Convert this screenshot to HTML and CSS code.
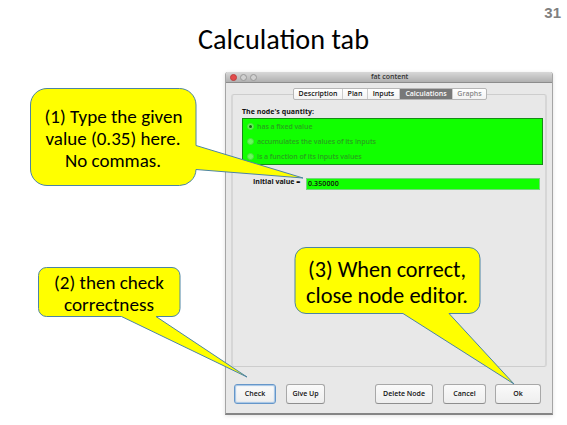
FILE: index.html
```html
<!DOCTYPE html>
<html lang="en">
<head>
<meta charset="utf-8">
<title>Calculation tab</title>
<link rel="stylesheet" href="styles.css">
</head>
<body>
<main class="slide">
  <div class="page-number">31</div>
  <h1 class="title"><svg width="180" height="44" viewBox="0 0 180 44"><text x="1" y="28.500" textLength="171" lengthAdjust="spacingAndGlyphs">Calculation tab</text></svg></h1>
  <section class="window">
    <header class="titlebar">
      <div class="lights"><i class="light close"></i><i class="light"></i><i class="light"></i></div>
      <span class="window-name">fat content</span>
    </header>
    <div class="panel">
      <nav class="tabs">
        <span class="tab description">Description</span><span class="tab plan">Plan</span><span class="tab inputs">Inputs</span><span class="tab calculations">Calculations</span><span class="tab graphs">Graphs</span>
      </nav>
      <div class="heading">The node's quantity:</div>
      <div class="options">
        <div class="option"><i class="radio on"></i><span class="fixed">has a fixed value</span></div>
        <div class="option"><i class="radio"></i><span class="accumulates">accumulates the values of its inputs</span></div>
        <div class="option"><i class="radio"></i><span class="function">is a function of its inputs values</span></div>
      </div>
      <div class="field"><label>Initial value =</label><div class="input">0.350000</div></div>
    </div>
    <footer class="buttons">
      <span class="button check">Check</span>
      <span class="button give-up">Give Up</span>
      <span class="button delete">Delete Node</span>
      <span class="button cancel">Cancel</span>
      <span class="button ok">Ok</span>
    </footer>
  </section>
  <svg class="callouts" width="567" height="425" viewBox="0 0 567 425">
    <path d="M47 88.500H179.500A16.500 16.500 0 0 1 196 105V145.500L303 178L196 169.500A16.500 16.500 0 0 1 179.500 185.500H47A16.500 16.500 0 0 1 30.500 169V105A16.500 16.500 0 0 1 47 88.500Z"/>
    <path d="M46.500 267.500H172A8 8 0 0 1 180 275.500V308.500A8 8 0 0 1 172 316.500H156L247 377L121.500 316.500H46.500A8 8 0 0 1 38.500 308.500V275.500A8 8 0 0 1 46.500 267.500Z"/>
    <path d="M306 247.500H469A11 11 0 0 1 480 258.500V302.500A11 11 0 0 1 469 313.500H449L514 384L403 313.500H306A11 11 0 0 1 295 302.500V258.500A11 11 0 0 1 306 247.500Z"/>
    <g class="callout-text">
      <text x="44.500" y="123" textLength="138" lengthAdjust="spacingAndGlyphs">(1) Type the given</text>
      <text x="45.500" y="145" textLength="135" lengthAdjust="spacingAndGlyphs">value (0.35) here.</text>
      <text x="65" y="167" textLength="96" lengthAdjust="spacingAndGlyphs">No commas.</text>
      <text x="54" y="289" textLength="110" lengthAdjust="spacingAndGlyphs">(2) then check</text>
      <text x="64" y="311" textLength="90" lengthAdjust="spacingAndGlyphs">correctness</text>
    </g>
    <g class="callout-text large">
      <text x="308" y="277" textLength="158" lengthAdjust="spacingAndGlyphs">(3) When correct,</text>
      <text x="306" y="303" textLength="162" lengthAdjust="spacingAndGlyphs">close node editor.</text>
    </g>
  </svg>
</main>
</body>
</html>
```
FILE: styles.css
```css
* { box-sizing: border-box; }
body { margin: 0; background: #fff; }
.slide {
  position: relative;
  width: 567px;
  height: 425px;
  overflow: hidden;
}
.page-number {
  height: 20px;
  padding: 4px 6px 0 0;
  text-align: right;
  font: bold 15px/18px "Liberation Sans", sans-serif;
  color: #7f7f7f;
}
.title { margin: 0 0 0 197px; height: 52px; }
.title svg { display: block; overflow: visible; }
.title text { font: 400 28px Carlito, Lato, sans-serif; fill: #000; }
.window {
  width: 328px;
  height: 343px;
  margin-left: 225px;
  display: flex;
  flex-direction: column;
  background: #e8e8e8;
  border: 1px solid #a5a5a5;
  border-top: 0;
  border-bottom: 2px solid #858585;
  border-radius: 3px 3px 0 0;
  box-shadow: 0 1px 4px rgba(0, 0, 0, .12);
  font: 600 7px/10px "Open Sans", sans-serif;
  color: #111;
  white-space: nowrap;
}
.titlebar {
  height: 11px;
  display: grid;
  grid-template-columns: 145px 1fr;
  align-items: center;
  background: linear-gradient(#d8d8d8, #b0b0b0);
  border-bottom: 1px solid #8c8c8c;
  border-radius: 3px 3px 0 0;
}
.lights { display: flex; gap: 3px; padding-left: 4px; }
.light {
  width: 7px;
  height: 7px;
  border-radius: 50%;
  border: 1px solid #999;
  background: #d0d0d0;
}
.close { background: #e44b4b; border-color: #bb4141; }
.window-name { font-weight: 600; color: #333; }
.panel {
  width: 316px;
  height: 273px;
  margin: 11px 0 0 5px;
  border: 1px solid #cdcdcd;
  border-right: 2px solid #d6d6d6;
  border-left: 2px solid #d6d6d6;
  border-radius: 3px;
}
.tabs {
  width: 194px;
  height: 12px;
  margin: -7px 0 0 60px;
  display: flex;
  background: linear-gradient(#fff, #f3f3f3);
  border: 1px solid #b6b6b6;
  border-radius: 2px;
}
.tab { text-align: center; border-right: 1px solid #ccc; line-height: 9px; }
.description { width: 49px; }
.plan { width: 25px; }
.inputs { width: 32px; }
.calculations { width: 53px; background: #787878; color: #fff; }
.graphs { flex: 1; border: 0; font-weight: 600; color: #888; }
.heading { margin: 7px 0 0 9px; height: 11px; font-weight: 700; letter-spacing: .04px; }
.options {
  width: 301px;
  height: 47px;
  margin-left: 9px;
  padding-left: 4px;
  display: grid;
  grid-template-rows: repeat(3, 15px);
  align-items: center;
  background: #1f0;
  border: 1px solid #168b16;
}
.option { display: flex; align-items: center; gap: 3px; height: 14px; font-weight: 600; letter-spacing: -.06px; color: #28a41e; }
.radio {
  width: 7px;
  height: 7px;
  display: grid;
  place-items: center;
  background: #69f85d;
  border: 1px solid #52dc45;
  border-radius: 50%;
}
.on::after { content: ""; width: 3px; height: 3px; background: #176519; border-radius: 50%; }
.field { display: flex; margin: 12px 0 0 20px; height: 13px; }
label { width: 53px; font-weight: 700; }
.input {
  width: 234px;
  height: 12px;
  margin-top: 1px;
  padding-left: 1px;
  background: #1f0;
  border: 1px solid #72d779;
  letter-spacing: .1px;
}
.buttons { display: flex; height: 20px; margin: 17px 0 0 8px; }
.button {
  height: 20px;
  text-align: center;
  line-height: 18px;
  background: linear-gradient(#fafafa, #eee);
  border: 1px solid #a8a8a8;
  border-bottom-color: #8e8e8e;
  border-radius: 3px;
}
.check { width: 42px; border: 1px solid #6596c9; box-shadow: inset 0 0 1px 1px #a2c4e5; }
.give-up { width: 39px; margin-left: 10px; }
.delete { width: 58px; margin-left: 50px; }
.cancel { width: 43px; margin-left: 10px; }
.ok { width: 46px; margin-left: 9px; }
.callouts { position: absolute; top: 0; left: 0; }
.callouts path { fill: #ff0; stroke: #4c84a4; stroke-width: 1; }
.callout-text { font: 400 18.500px Carlito, Lato, sans-serif; fill: #000; }
.large { font-size: 21.500px; }
```
